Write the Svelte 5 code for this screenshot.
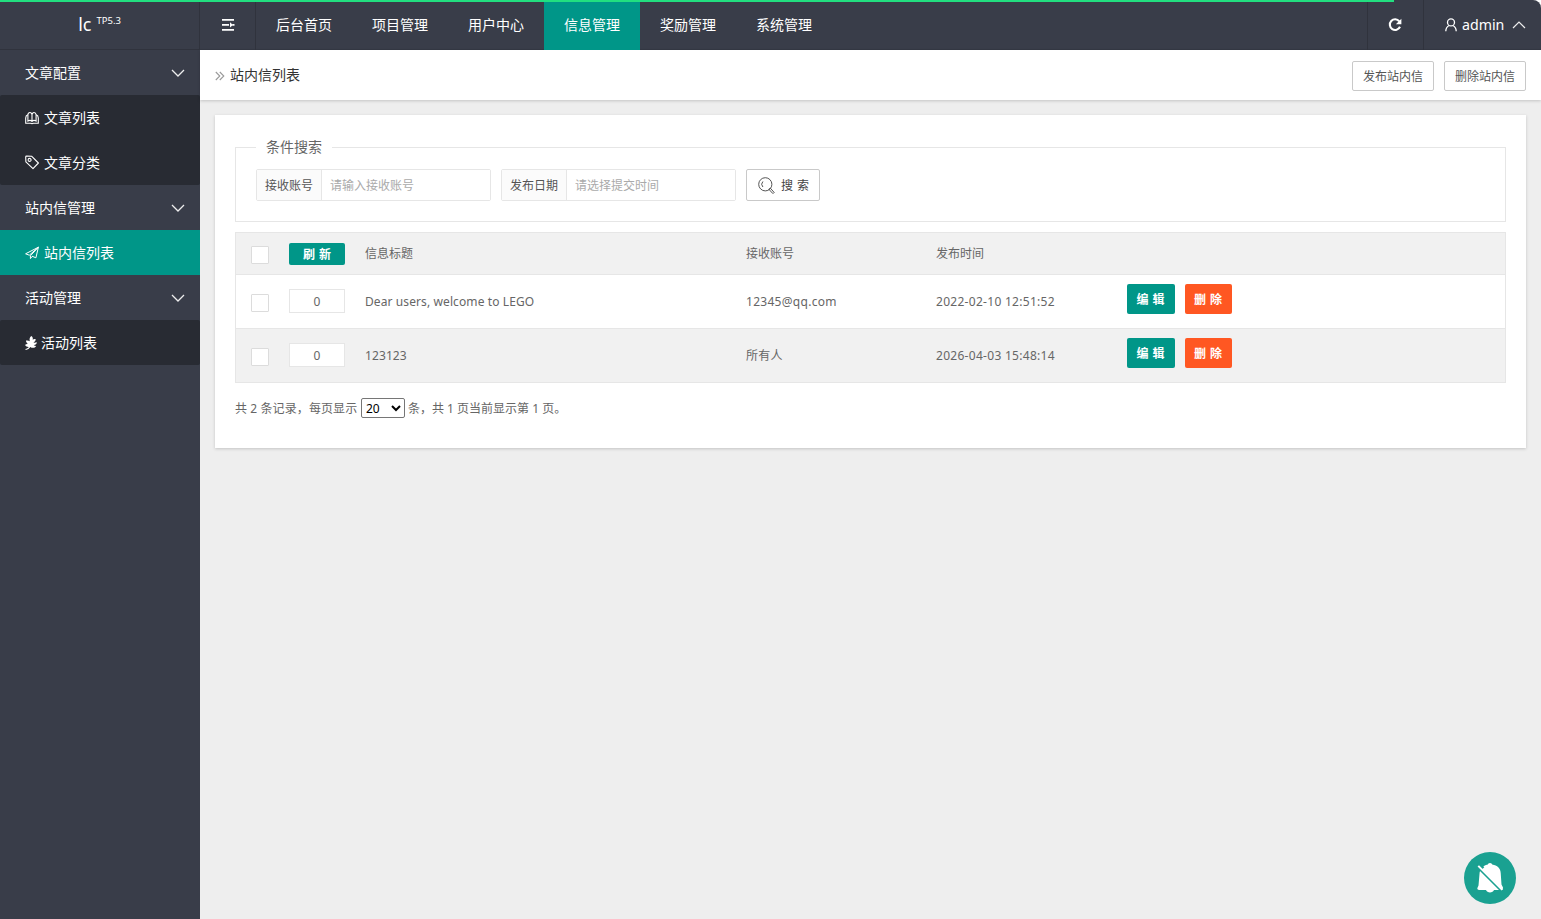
<script>
  const nav = ['后台首页', '项目管理', '用户中心', '信息管理', '奖励管理', '系统管理'];
  const activeNav = '信息管理';
  const groups = [
    { title: '文章配置', items: [{ icon: 'book', label: '文章列表' }, { icon: 'tag', label: '文章分类' }] },
    { title: '站内信管理', items: [{ icon: 'plane', label: '站内信列表', active: true }] },
    { title: '活动管理', items: [{ icon: 'leaf', label: '活动列表' }] }
  ];
  const rows = [
    { title: 'Dear users, welcome to LEGO', account: '12345@qq.com', time: '2022-02-10 12:51:52' },
    { title: '123123', account: '所有人', time: '2026-04-03 15:48:14' }
  ];
  const progress = 1394;
</script>

<div class="layout">
  <div class="progress" style="width: {progress}px"></div>
  <aside>
    <div class="logo"><span>lc</span><sup>TP5.3</sup></div>
    {#each groups as group}
      <div class="group-title">
        {group.title}
        <svg width="14" height="8" viewBox="0 0 14 8"><path d="M1 1l6 6 6-6" fill="none" stroke="#eee" stroke-width="1.3" /></svg>
      </div>
      <div class="sub">
        {#each group.items as item}
          <a class:active={item.active} class:narrow={item.icon === 'leaf'}>
            {#if item.icon === 'book'}
              <svg width="14" height="14" viewBox="0 0 14 14" fill="none" stroke="#fff" stroke-width="1.1">
                <path d="M7 10.300V3.800C6.600 .7 3.300 .7 2.900 3.800V10C4.200 9.200 6 9.200 7 10.500C8 9.200 9.800 9.200 11.100 10V3.800C10.700 .7 7.400 .7 7 3.800" />
                <path d="M2.900 3.800C1.500 4.200.7 5.500.7 7V12.200H5.500L7 12.700 8.500 12.200H13.300V7C13.300 5.500 12.500 4.200 11.100 3.800" />
              </svg>
            {:else if item.icon === 'tag'}
              <svg width="14" height="15" viewBox="0 0 14 15" fill="none" stroke="#fff" stroke-width="1.1" stroke-linejoin="round">
                <path d="M.7 1.900Q.7 1.100 1.500 1.100L6.800 1.300 13.400 8 8 13.700 .900 6.900Z" /><circle cx="4.600" cy="4.900" r="1.500" />
              </svg>
            {:else if item.icon === 'plane'}
              <svg width="14" height="14" viewBox="0 0 14 14" fill="none" stroke="#fff" stroke-width="1" stroke-linejoin="round">
                <path d="M13.400 1.200L.6 7.800 4.300 9.200 13.400 1.200 10.900 11.800 7 10.200M13.400 1.200L5.400 9.800V12.600L7.200 10.400" />
              </svg>
            {:else}
              <svg width="12" height="14" viewBox="0 0 12 14" fill="#fff">
                <path d="M6.300 0C7.800 1.100 8.100 2.500 7.700 3.700 8.500 3 9.600 2.800 10.700 3.200 10.600 4.900 9.700 5.900 8.300 6.600 9.500 6.800 10.700 6.600 11.900 6.300 11.700 8.100 10.400 9 8.700 8.900 9.300 9.500 10.200 9.800 11.200 9.900 10 12 7.200 12.300 5.300 10.900 4.400 12.300 2.900 13.500.8 14L.3 12.900C1.900 12.500 3 11.900 3.800 10.900 2.200 11 .8 10.200 0 8.900 1 8.100 2 7.900 3.200 8.200 1.900 7.300 1 6.100 1 4.500 2.500 4.200 3.800 4.500 4.800 5.200 4.200 3 4.700 1.300 6.300 0Z" />
              </svg>
            {/if}
            <span>{item.label}</span>
          </a>
        {/each}
      </div>
    {/each}
  </aside>

  <div class="main">
    <header>
      <div class="cell fold">
        <svg width="14" height="12" viewBox="0 0 14 12" fill="#fff"><path d="M1 0h12v1.800H1zM1 5h7v1.800H1zM1 10h12v1.800H1zM9 3.300L12 5.900 9 8.400zM11.500 5h2v1.800h-2z" /></svg>
      </div>
      <nav>
        {#each nav as label}<a class:active={label === activeNav}>{label}</a>{/each}
      </nav>
      <div class="cell refresh">
        <svg width="14" height="14" viewBox="0 0 14 14"><path d="M11.300 3.300A5.300 5.300 0 1 0 12 8.800" fill="none" stroke="#fff" stroke-width="2.100" /><path d="M13.400.7V6.200H7.900Z" fill="#fff" /></svg>
      </div>
      <div class="user">
        <svg width="12" height="14" viewBox="0 0 12 14" fill="none" stroke="#fff" stroke-width="1.300"><circle cx="6" cy="4.400" r="3.500" /><path d="M.8 13.200C.8 10 2.500 8.300 4.300 7.500M7.700 7.500C9.500 8.300 11.200 10 11.200 13.200" /></svg>
        <span>admin</span>
        <svg width="14" height="8" viewBox="0 0 14 8"><path d="M1 7l6-6 6 6" fill="none" stroke="#eee" stroke-width="1.200" /></svg>
      </div>
    </header>

    <div class="crumb">
      <svg width="10" height="10" viewBox="0 0 10 10" fill="none" stroke="#999" stroke-width="1.100"><path d="M.8 1l4 4-4 4M4.800 1l4 4-4 4" /></svg>
      <h1>站内信列表</h1>
      <button>发布站内信</button>
      <button>删除站内信</button>
    </div>

    <section class="card">
      <fieldset>
        <legend>条件搜索</legend>
        <form>
          <div class="field"><label for="account">接收账号</label><input id="account" placeholder="请输入接收账号" /></div>
          <div class="field"><label for="date">发布日期</label><input id="date" placeholder="请选择提交时间" /></div>
          <button type="button" class="search">
            <svg width="17" height="17" viewBox="0 0 17 17" fill="none" stroke="#555" stroke-width="1"><circle cx="7.300" cy="7.300" r="6.600" /><path d="M4.900 4.500A4 4 0 0 0 4.900 10M10.800 12.200L14.600 16.300Q15.600 16.500 16.200 15.500L12.400 11.200Z" /></svg>
            <span>搜 索</span>
          </button>
        </form>
      </fieldset>

      <div class="table">
        <div class="row head">
          <span><i class="check"></i></span>
          <span><b class="reload">刷 新</b></span>
          <span>信息标题</span><span>接收账号</span><span>发布时间</span><span></span>
        </div>
        {#each rows as row, i}
          <div class="row" class:even={i % 2 === 1}>
            <span><i class="check"></i></span>
            <span><i class="sort">0</i></span>
            <span class="title">{row.title}</span><span class="wide">{row.account}</span><span class="wide">{row.time}</span>
            <span class="actions"><b>编 辑</b><b class="danger">删 除</b></span>
          </div>
        {/each}
      </div>

      <div class="pager">
        <span class="total">共 2 条记录，每页显示</span>
        <select><option>20</option></select>
        <span>条，共 1 页当前显示第 1 页。</span>
      </div>
    </section>
  </div>

  <div class="bell">
    <svg width="28" height="32" viewBox="0 0 28 32">
      <path d="M14 1C15.300 1 16 1.800 16.200 2.600 21.300 3.500 24.500 6.500 24.700 11L25.500 22.500 27 25.500C27 27 26.500 27.800 25.500 28H18C17 31.200 11 31.200 10 28H3C2 28 1.300 27.300 1.300 26.300L2.500 23.500 3.500 12C3.800 7.500 6.700 3.500 11.800 2.600 12 1.800 12.700 1 14 1Z" fill="#fff" />
      <path d="M2 1.500L7 6.500" stroke="#1aa191" stroke-width="3.500" /><path d="M2 5.500L25.500 29" stroke="#1aa191" stroke-width="2.300" /><path d="M2.300 3.900L26.300 27.900" stroke="#fff" stroke-width="2" />
    </svg>
  </div>
</div>

<style>
  .layout, .layout * { box-sizing: border-box; }
  .layout { display: flex; height: 919px; position: relative; overflow: hidden; font: 14px/20px "Noto Sans", "Noto Sans CJK SC", sans-serif; color: #666; }
  .progress { position: absolute; top: 0; left: 0; height: 2px; background: #22df80; z-index: 3; }
  svg { display: block; flex: none; }
  button, input, select { font: inherit; color: inherit; }

  aside { width: 200px; background: #393d49; color: #fff; flex: none; }
  .logo { height: 50px; display: flex; justify-content: center; padding-top: 14px; border-bottom: 1px solid #30333d; border-right: 1px solid #30333d; }
  .logo span { font-size: 18px; line-height: 20px; }
  .logo sup { font-size: 9.500px; line-height: 14px; margin-left: 5px; vertical-align: baseline; }
  .group-title { height: 45px; padding: 0 15px 0 25px; display: flex; align-items: center; justify-content: space-between; }
  .sub { background: #282b33; border-radius: 2px; }
  .sub a { height: 45px; display: flex; align-items: center; gap: 5px; padding-left: 25px; }
  .sub a.narrow { gap: 4px; }
  .sub a.active { background: #009688; }

  .main { flex: 1; min-width: 0; background: linear-gradient(#fff 50px, #eee 50px); }
  header { height: 50px; display: flex; background: #393d49; color: #fff; box-shadow: inset 0 -1px #353944; border-top-right-radius: 8px; }
  .cell { width: 56px; display: flex; align-items: center; justify-content: center; border-right: 1px solid #30333d; }
  nav { flex: 1; display: flex; }
  nav a { width: 96px; line-height: 50px; text-align: center; }
  nav a.active { background: #009688; }
  .refresh { width: 57px; border-left: 1px solid #30333d; padding-right: 2px; }
  .user { width: 117px; display: flex; align-items: center; padding-left: 21px; }
  .user span { font-size: 14.200px; width: 50px; margin-left: 5px; }

  .crumb { height: 50px; background: #fff; display: flex; align-items: center; padding: 0 15px; box-shadow: 0 1px 3px rgba(0, 0, 0, .18); }
  .crumb svg { margin-top: 2px; }
  h1 { font-size: 14px; font-weight: 400; color: #333; margin: 0 auto 0 5px; }
  .crumb button { width: 82px; height: 30px; margin: 2px 0 0 10px; padding: 2px 0 0; background: #fff; border: 1px solid #c9c9c9; border-radius: 2px; font-size: 12px; color: #555; }

  .card { margin: 15px 15px 0; height: 333px; padding: 22px 20px 0; background: #fff; box-shadow: 0 1px 3px rgba(0, 0, 0, .18); }
  fieldset { margin: 0; height: 85px; padding: 12px 20px 0; border: 1px solid #e6e6e6; min-width: 0; }
  legend { padding: 0 10px; height: 20px; }
  form { display: flex; gap: 10px; font-size: 12px; }
  .field { width: 235px; height: 32px; display: flex; border: 1px solid #e6e6e6; border-radius: 2px; }
  .field label { width: 64px; background: #fbfbfb; text-align: center; line-height: 32px; color: #555; }
  .field input { flex: 1; min-width: 0; border: 0; border-left: 1px solid #e6e6e6; padding: 2px 8px 0; outline: 0; background: #fff; }
  .field input::placeholder { color: #aaa; opacity: 1; }
  .search { width: 74px; height: 32px; padding: 0 0 0 11px; display: flex; align-items: center; gap: 6px; background: #fff; border: 1px solid #c9c9c9; border-radius: 2px; color: #444; white-space: nowrap; }
  .search span { padding-top: 2px; word-spacing: 1px; }

  .table { margin-top: 10px; border: 1px solid #e6e6e6; font-size: 12px; }
  .row { display: grid; grid-template-columns: 53px 76px 381px 190px 191px 1fr; align-items: center; height: 54px; border-top: 1px solid #e6e6e6; }
  .row.head { height: 41px; border-top: 0; background: #f1f1f1; }
  .row.even { background: #f1f1f1; }
  .title { letter-spacing: .1px; }
  .wide { letter-spacing: .29px; }
  i, b { font-style: normal; display: block; }
  .check { width: 18px; height: 18px; margin: 3px 0 0 15px; background: #fff; border: 1px solid #dcdcdc; border-radius: 1px; }
  .sort { width: 56px; height: 24px; background: #fff; border: 1px solid #e6e6e6; text-align: center; line-height: 23px; margin-top: -1px; }
  .reload { width: 56px; height: 22px; line-height: 24px; text-align: center; background: #009688; color: #fff; border-radius: 2px; word-spacing: 1px; }
  .actions { display: flex; gap: 10px; margin-top: -6px; }
  .actions b { width: 48px; height: 30px; line-height: 32px; text-align: center; border-radius: 2px; color: #fff; background: #009688; padding-right: 1px; word-spacing: 1px; }
  .actions .danger { width: 47px; background: #ff5722; }

  .pager { margin-top: 15px; display: flex; align-items: center; height: 20px; font-size: 12px; gap: 3px; }
  .pager span { padding-top: 2px; }
  .total { width: 123px; white-space: nowrap; letter-spacing: .1px; }
  select { width: 44px; height: 20px; padding: 0; border: 1px solid #767676; border-radius: 2px; background: #fff; color: #000; }

  .bell { position: absolute; left: 1464px; top: 852px; width: 52px; height: 52px; border-radius: 50%; background: #1aa191; display: flex; align-items: center; justify-content: center; }
</style>
